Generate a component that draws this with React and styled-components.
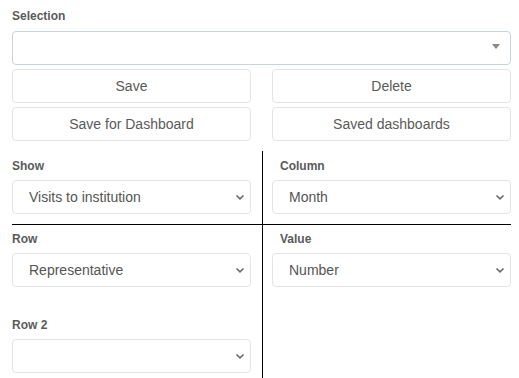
import React from "react";
import styled, { createGlobalStyle } from "styled-components";

const Global = createGlobalStyle`
  html, body { margin: 0; padding: 0; background: #fff; }
  body { font-family: "Liberation Sans", Arial, sans-serif; }
  * { box-sizing: border-box; }
`;

const Page = styled.div`
  width: 519px;
  padding: 7px 8px 0 12px;
`;

const Label = styled.div`
  font-size: 12px;
  line-height: 18px;
  font-weight: 700;
  color: #5a5a5a;
  margin-bottom: ${(p) => p.$mb ?? 5}px;
  margin-top: ${(p) => p.$mt ?? 0}px;
  padding-left: ${(p) => (p.$indent ? 8 : 0)}px;
`;

const ComboBox = styled.div`
  position: relative;
  height: 34px;
  border: 1px solid #c9d3dd;
  border-radius: 4px;
  background: #fff;
`;

const Caret = styled.span`
  position: absolute;
  right: 10px;
  top: 12px;
  width: 0;
  height: 0;
  border-left: 4px solid transparent;
  border-right: 4px solid transparent;
  border-top: 5px solid #888;
`;

const ButtonGrid = styled.div`
  display: grid;
  grid-template-columns: 1fr 1fr;
  column-gap: 21px;
  row-gap: 4px;
  margin-top: 4px;
`;

const Button = styled.button`
  height: 34px;
  border: 1px solid #e2e5e8;
  border-radius: 4px;
  background: #fff;
  color: #5a5a5a;
  font-family: "Liberation Sans", Arial, sans-serif;
  font-size: 14px;
  padding: 0;
`;

const Grid = styled.div`
  display: grid;
  grid-template-columns: 251px 248px;
  margin-top: 10px;
`;

const Cell = styled.div`
  padding-top: ${(p) => (p.$top ? 6 : 5)}px;
  padding-bottom: ${(p) => (p.$top ? 10 : 12)}px;
  padding-left: ${(p) => (p.$right ? 9 : 0)}px;
  padding-right: ${(p) => (p.$right ? 0 : 11)}px;
  border-right: ${(p) => (p.$right ? "none" : "1px solid #000")};
  border-bottom: ${(p) => (p.$top ? "1px solid #000" : "none")};
`;

const SelectWrap = styled.div`
  position: relative;
  width: 239px;
  height: 34px;
`;

const Select = styled.select`
  appearance: none;
  -webkit-appearance: none;
  width: 100%;
  height: 34px;
  border: 1px solid #e2e5e8;
  border-radius: 4px;
  background: #fff;
  color: #555;
  font-family: "Liberation Sans", Arial, sans-serif;
  font-size: 14px;
  padding: 0 24px 0 16px;
  outline: none;
`;

const Chevron = styled.svg`
  position: absolute;
  right: 6px;
  top: 14px;
  pointer-events: none;
`;

function Field({ label, value, indent, mt }) {
  return (
    <div>
      <Label $indent={indent} $mt={mt}>{label}</Label>
      <SelectWrap>
        <Select defaultValue={value}>
          <option value={value}>{value}</option>
        </Select>
        <Chevron width="10" height="7" viewBox="0 0 10 7">
          <path d="M1.5 1.5 L5 4.8 L8.5 1.5" fill="none" stroke="#6a6a6a" strokeWidth="1.7" />
        </Chevron>
      </SelectWrap>
    </div>
  );
}

export default function App() {
  return (
    <>
      <Global />
      <Page>
        <Label $mb={6}>Selection</Label>
        <ComboBox>
          <Caret />
        </ComboBox>
        <ButtonGrid>
          <Button>Save</Button>
          <Button>Delete</Button>
          <Button>Save for Dashboard</Button>
          <Button>Saved dashboards</Button>
        </ButtonGrid>
        <Grid>
          <Cell $top>
            <Field label="Show" value="Visits to institution" />
          </Cell>
          <Cell $top $right>
            <Field label="Column" value="Month" indent />
          </Cell>
          <Cell>
            <Field label="Row" value="Representative" />
            <Field label="Row 2" value="" mt={29} />
          </Cell>
          <Cell $right>
            <Field label="Value" value="Number" indent />
          </Cell>
        </Grid>
      </Page>
    </>
  );
}
